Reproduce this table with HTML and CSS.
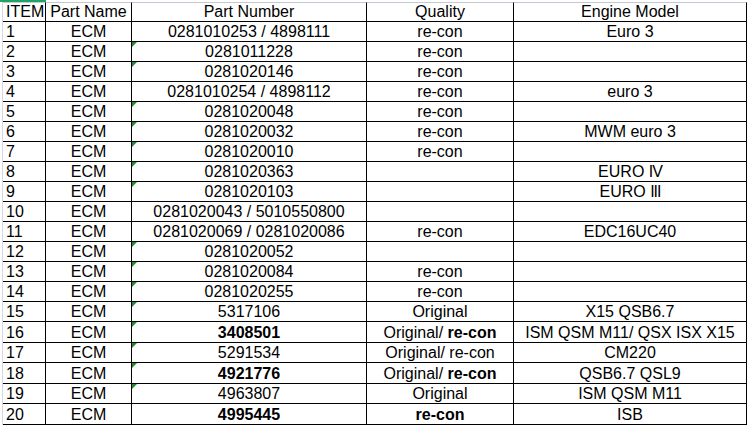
FILE: index.html
```html
<!DOCTYPE html>
<html lang="en">
<head>
<meta charset="utf-8">
<title>ECM Parts</title>
<link rel="stylesheet" href="styles.css">
</head>
<body>
<div class="topstrip"><div class="sel"></div></div>
<div class="sheet">
  <div class="c hd left">ITEM</div><div class="c hd">Part Name</div><div class="c hd">Part Number</div><div class="c hd">Quality</div><div class="c hd">Engine Model</div>

  <div class="c left">1</div><div class="c">ECM</div><div class="c">0281010253 / 4898111</div><div class="c">re-con</div><div class="c">Euro 3</div>
  <div class="c left">2</div><div class="c">ECM</div><div class="c tri">0281011228</div><div class="c">re-con</div><div class="c"></div>
  <div class="c left">3</div><div class="c">ECM</div><div class="c tri">0281020146</div><div class="c">re-con</div><div class="c"></div>
  <div class="c left">4</div><div class="c">ECM</div><div class="c">0281010254 / 4898112</div><div class="c">re-con</div><div class="c">euro 3</div>
  <div class="c left">5</div><div class="c">ECM</div><div class="c tri">0281020048</div><div class="c">re-con</div><div class="c"></div>
  <div class="c left">6</div><div class="c">ECM</div><div class="c tri">0281020032</div><div class="c">re-con</div><div class="c">MWM euro 3</div>
  <div class="c left">7</div><div class="c">ECM</div><div class="c tri">0281020010</div><div class="c">re-con</div><div class="c"></div>
  <div class="c left">8</div><div class="c">ECM</div><div class="c tri">0281020363</div><div class="c"></div><div class="c"><span>EURO <span class="roman">IV</span></span></div>
  <div class="c left">9</div><div class="c">ECM</div><div class="c tri">0281020103</div><div class="c"></div><div class="c"><span>EURO <span class="roman">III</span></span></div>
  <div class="c left">10</div><div class="c">ECM</div><div class="c">0281020043 / 5010550800</div><div class="c"></div><div class="c"></div>
  <div class="c left">11</div><div class="c">ECM</div><div class="c">0281020069 / 0281020086</div><div class="c">re-con</div><div class="c">EDC16UC40</div>
  <div class="c left">12</div><div class="c">ECM</div><div class="c tri">0281020052</div><div class="c"></div><div class="c"></div>
  <div class="c left">13</div><div class="c">ECM</div><div class="c tri">0281020084</div><div class="c">re-con</div><div class="c"></div>
  <div class="c left">14</div><div class="c">ECM</div><div class="c tri">0281020255</div><div class="c">re-con</div><div class="c"></div>
  <div class="c left">15</div><div class="c">ECM</div><div class="c tri">5317106</div><div class="c">Original</div><div class="c">X15 QSB6.7</div>
  <div class="c tall left">16</div><div class="c tall">ECM</div><div class="c tall tri"><b>3408501</b></div><div class="c tall"><span>Original/ <b>re-con</b></span></div><div class="c tall">ISM QSM M11/ QSX ISX X15</div>
  <div class="c left">17</div><div class="c">ECM</div><div class="c tri">5291534</div><div class="c">Original/ re-con</div><div class="c">CM220</div>
  <div class="c tall left">18</div><div class="c tall">ECM</div><div class="c tall tri"><b>4921776</b></div><div class="c tall"><span>Original/ <b>re-con</b></span></div><div class="c tall">QSB6.7 QSL9</div>
  <div class="c left">19</div><div class="c">ECM</div><div class="c tri">4963807</div><div class="c">Original</div><div class="c">ISM QSM M11</div>
  <div class="c tall left">20</div><div class="c tall">ECM</div><div class="c tall"><b>4995445</b></div><div class="c tall"><b>re-con</b></div><div class="c tall">ISB</div>
</div>
</body>
</html>
```

FILE: styles.css
```css
html, body {
  margin: 0;
  padding: 0;
  background: #ffffff;
}

body {
  font-family: "Liberation Sans", Arial, sans-serif;
  font-size: 16px;
  color: #000000;
  width: 749px;
  height: 427px;
  overflow: hidden;
}

.topstrip {
  height: 2px;
  display: flex;
}

.topstrip .sel {
  width: 46px;
  height: 2px;
  background: #21a366;
}

.sheet {
  display: grid;
  grid-template-columns: 43px 86px 235px 147px 233px;
  grid-auto-rows: auto;
  margin-left: 2px;
  border-left: 1px solid #d4d8e2;
  width: max-content;
}

.c {
  box-sizing: border-box;
  height: 20px;
  border-right: 1px solid #000000;
  border-bottom: 1px solid #000000;
  display: flex;
  align-items: flex-end;
  justify-content: center;
  line-height: 18px;
  white-space: nowrap;
  position: relative;
}

.c.tall {
  height: 21px;
}

.c.hd {
  border-top: 1px solid #c3c8d4;
}

.c.left {
  justify-content: flex-start;
  padding-left: 3px;
}

.c.tri::before {
  content: "";
  position: absolute;
  left: 0;
  top: 0;
  width: 0;
  height: 0;
  border-top: 5px solid #1f8a2f;
  border-right: 5px solid transparent;
}

.roman {
  letter-spacing: -1px;
}

b {
  font-weight: bold;
}
```
